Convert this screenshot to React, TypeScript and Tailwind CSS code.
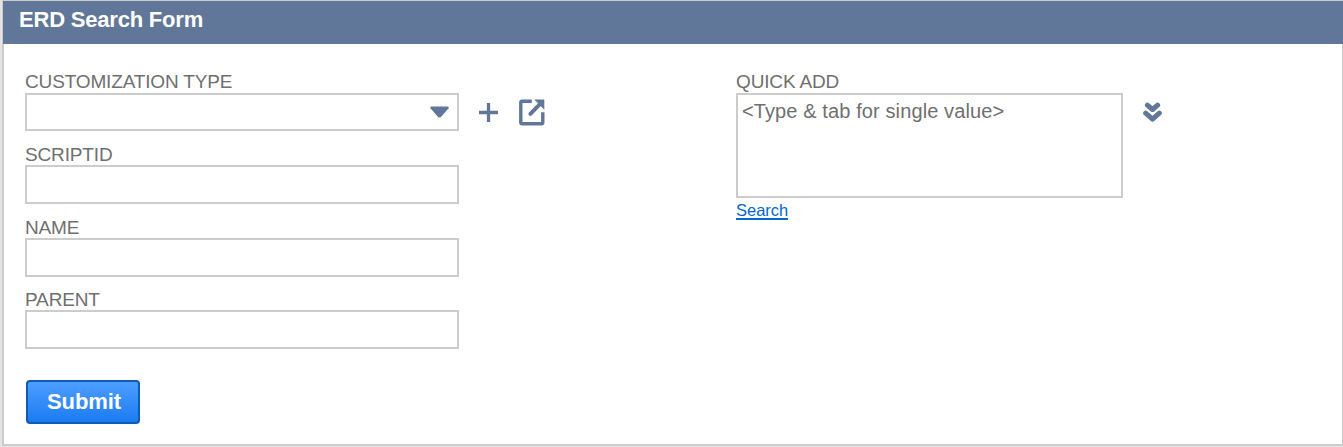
import React from "react";

function Label({ children, offset }: { children: string; offset: string }) {
  return (
    <div className={`h-6 text-[19px] leading-6 tracking-[-0.15px] whitespace-nowrap text-[#6f6f6f] ${offset}`}>{children}</div>
  );
}

function TextField({ label, gap }: { label: string; gap: string }) {
  return (
    <div className={gap}>
      <Label offset="pt-0.5">{label}</Label>
      <input aria-label={label} className="block h-[39px] w-[434px] border-2 border-[#ccc] bg-white px-1 outline-none" />
    </div>
  );
}

function PlusIcon() {
  return (
    <svg width="20" height="20" viewBox="0 0 20 20" fill="none" stroke="#607799" strokeWidth="3.3">
      <path d="M10.5 1v19M1 10.5h19" />
    </svg>
  );
}

function OpenIcon() {
  return (
    <svg width="26" height="27" viewBox="0 0 26 27" fill="none" stroke="#607799" strokeWidth="3.4">
      <path d="M12.8 2.2H3Q1.8 2.2 1.8 3.4v20q0 1.3 1.3 1.3h19.4q1.3 0 1.3-1.3V13.3" />
      <path d="M11.4 14.8L20 6.2" strokeWidth="4" strokeLinecap="round" />
      <path d="M15.3 0.5h10v10.2z" fill="#607799" stroke="none" />
    </svg>
  );
}

function DoubleChevron() {
  return (
    <svg width="20" height="21" viewBox="0 0 20 21" fill="none" stroke="#607799" strokeWidth="5" strokeLinecap="round" strokeLinejoin="round">
      <path d="M4.4 3.1l5.1 4.4 5.1-4.4" />
      <path d="M2.7 11.1l6.8 6 6.8-6" />
    </svg>
  );
}

export default function App() {
  return (
    <div className="h-[447px] w-[1343px] overflow-hidden bg-[#e4e4e4] pl-0.5 font-['Liberation_Sans',Arial,sans-serif]">
      <div className="flex h-[446px] flex-col border-t border-b-2 border-[#ccc] bg-white">
        <header className="flex h-[43px] shrink-0 border-l border-[#ccc] bg-[#607799] pl-4">
          <h1 className="pt-1.5 text-[22px] leading-[26px] font-bold tracking-[-0.2px] text-white">ERD Search Form</h1>
        </header>
        <main className="flex flex-1 border-r border-l-2 border-[#ccc] pt-[25px] pl-[21px]">
          <form className="w-[711px]" onSubmit={(e) => e.preventDefault()}>
            <Label offset="pt-px">CUSTOMIZATION TYPE</Label>
            <div className="flex h-[38px] items-center">
              <div className="flex h-[38px] w-[434px] items-center justify-end border-2 border-[#ccc] pr-2">
                <svg width="19" height="12" viewBox="0 0 19 12" fill="#607799">
                  <path d="M1.4 0.5h16.2q1.4 0 1 1.7l-7.4 8.5q-1.7 1.5-3.4 0L0.5 2.2Q0 0.5 1.4 0.5z" />
                </svg>
              </div>
              <button type="button" aria-label="New" className="ml-[19px]"><PlusIcon /></button>
              <button type="button" aria-label="Open" className="ml-[21px]"><OpenIcon /></button>
            </div>
            <TextField label="SCRIPTID" gap="mt-2.5" />
            <TextField label="NAME" gap="mt-2.5" />
            <TextField label="PARENT" gap="mt-[9px]" />
            <button type="submit" className="mt-[31px] ml-px block h-11 w-[114px] rounded-[4px] border-2 border-[#125ab2] bg-linear-to-b from-[#4c9dff] to-[#187bf2] pl-0.5 text-[22px] leading-[38px] font-bold tracking-[-0.1px] text-white">
              Submit
            </button>
          </form>
          <section>
            <Label offset="pt-px">QUICK ADD</Label>
            <div className="flex items-start">
              <div className="h-[105px] w-[387px] border-2 border-[#ccc] pt-1 pl-1 text-[20px] leading-6 tracking-[0.11px] text-[#6f6f6f]">
                {"<Type & tab for single value>"}
              </div>
              <button type="button" aria-label="Expand" className="mt-[9px] ml-5"><DoubleChevron /></button>
            </div>
            <a href="#" className="mt-1 inline-block h-[18px] border-b-2 border-[#0068d0] text-[16.5px] leading-[17px] text-[#0068d0]">Search</a>
          </section>
        </main>
      </div>
    </div>
  );
}
